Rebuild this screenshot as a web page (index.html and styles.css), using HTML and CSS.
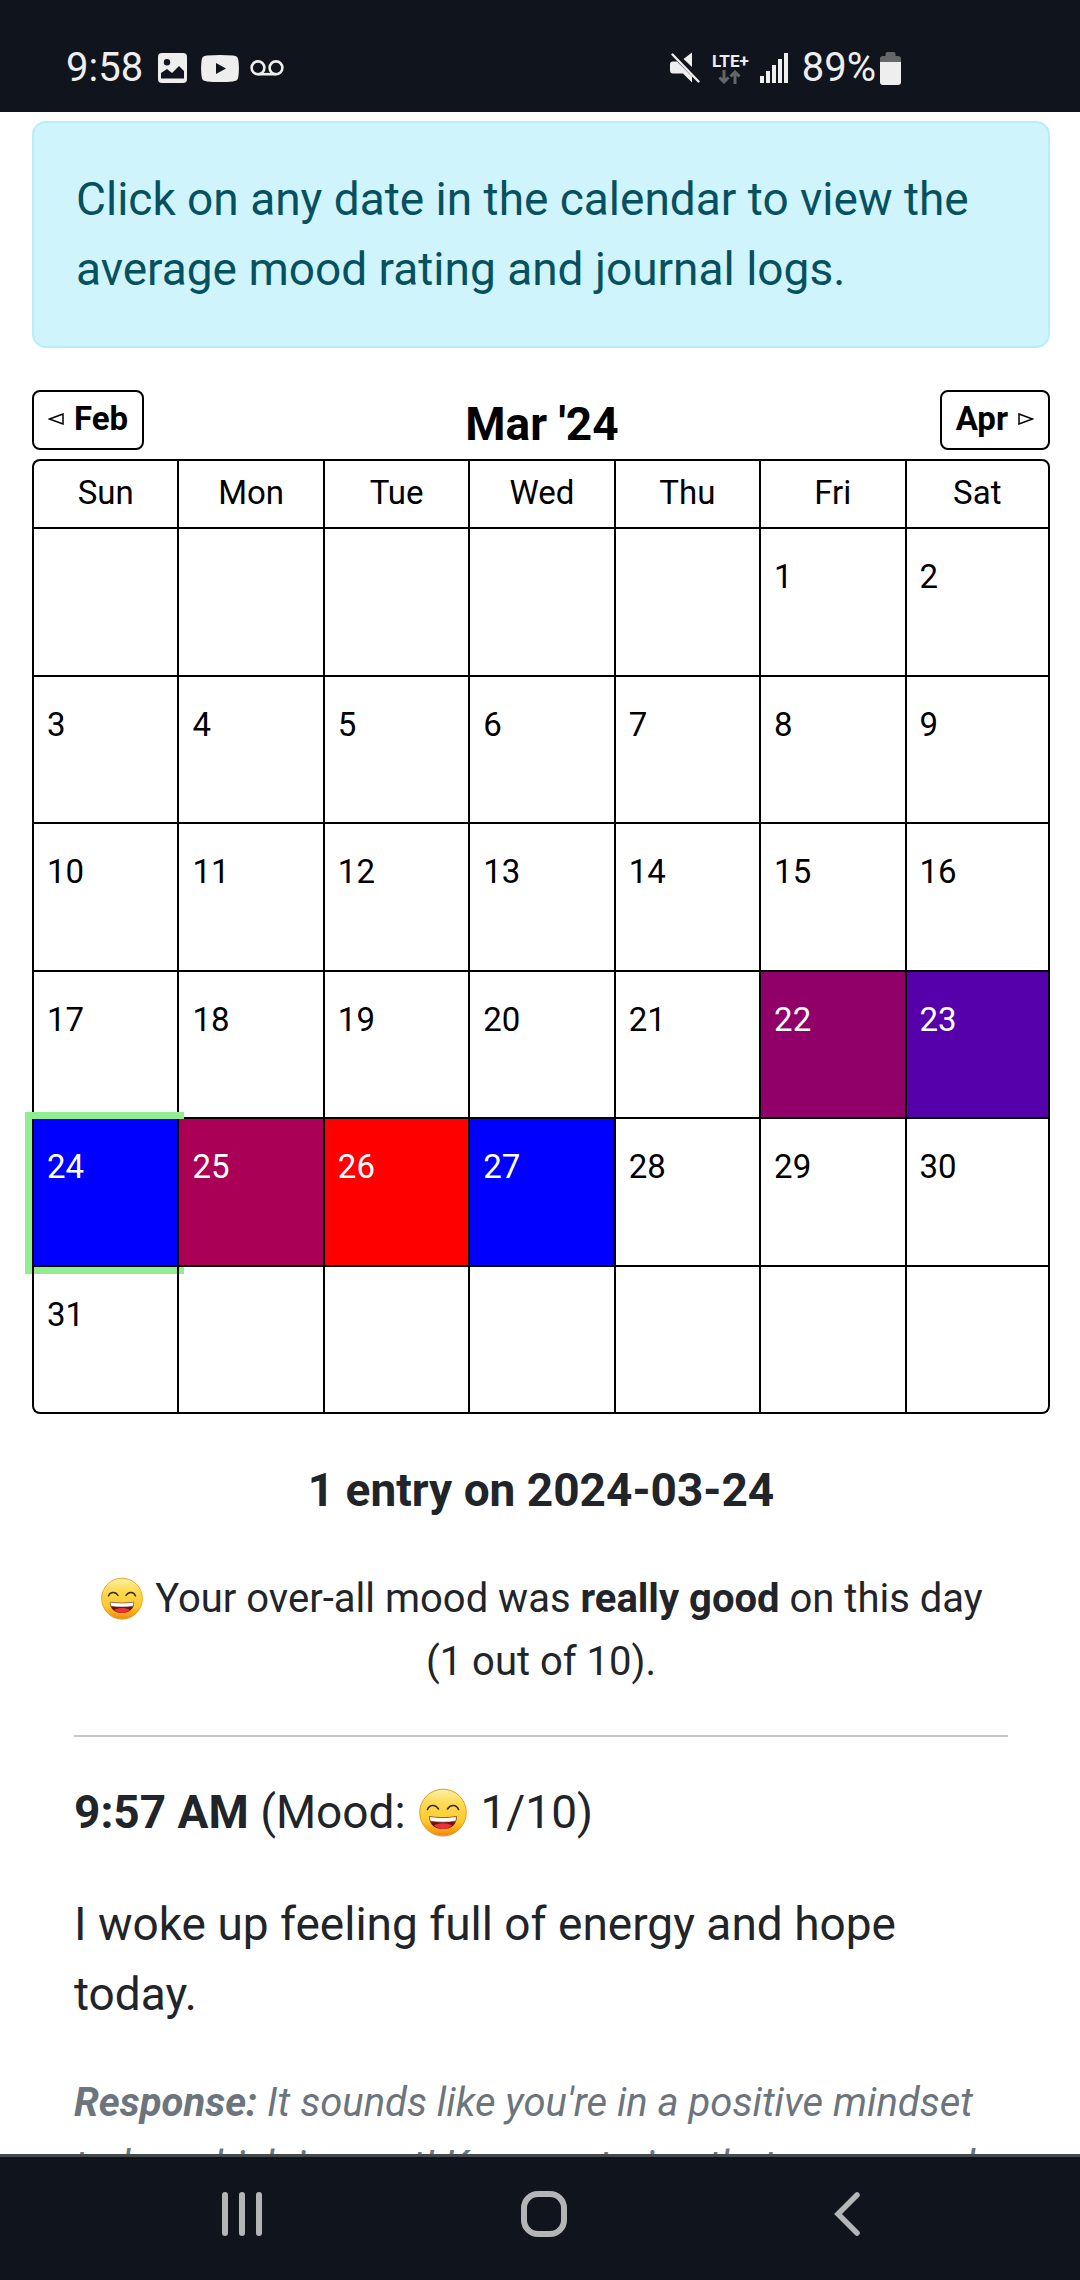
FILE: index.html
```html
<!DOCTYPE html>
<html lang="en">
<head>
<meta charset="utf-8">
<meta name="viewport" content="width=device-width, initial-scale=1">
<title>Mood calendar</title>
<link rel="stylesheet" href="styles.css">
</head>
<body>
<svg class="defs" width="0" height="0" aria-hidden="true">
  <defs>
    <linearGradient id="face" x1="0" y1="0" x2="0" y2="1">
      <stop offset="0" stop-color="#fdf0a8"/>
      <stop offset=".3" stop-color="#fddb55"/>
      <stop offset=".7" stop-color="#fdc92c"/>
      <stop offset="1" stop-color="#f08a0c"/>
    </linearGradient>
    <symbol id="grin" viewBox="0 0 48 50">
      <ellipse cx="24" cy="26.500" rx="22" ry="22.500" fill="#c9a98c" opacity=".45"/>
      <circle cx="24" cy="24.500" r="23.300" fill="url(#face)" stroke="#e79a1a" stroke-width="1"/>
      <path d="M8.500 21.500c2-5 8-5.500 11-.5M28.500 21c3-5 9-4.500 11 .5" fill="none" stroke="#3b2a12" stroke-width="1.600" stroke-linecap="round"/>
      <path d="M10.500 28.500c9 1.500 18 1.500 27 0 .5 8-5 12.500-13.500 12.500s-14-4.500-13.500-12.500z" fill="#7a0d0d"/>
      <path d="M15 37.500c5-3 13-3 18 0-4.500 4.500-13.500 4.500-18 0z" fill="#e8323a"/>
      <path d="M10.500 28.500c9 1.500 18 1.500 27 0 0 1.800-.3 3.300-.8 4.700-8 1.300-17.400 1.300-25.400 0-.5-1.400-.8-2.900-.8-4.700z" fill="#fff" stroke="#4b3018" stroke-width=".6"/>
    </symbol>
  </defs>
</svg>

<header class="status">
  <div class="status-group">
    <span class="status-text">9:58</span>
    <svg class="ic-photo" width="29" height="30" viewBox="0 0 29 30"><path fill="#eee" fill-rule="evenodd" d="M4 0h21a4 4 0 0 1 4 4v22a4 4 0 0 1-4 4H4a4 4 0 0 1-4-4V4a4 4 0 0 1 4-4zM9 6a3.200 3.200 0 1 0 0 6.400A3.200 3.200 0 0 0 9 6zM3 20v5.500h23V18l-5-5-7 7-5-4z"/></svg>
    <svg class="ic-video" width="38" height="27" viewBox="0 0 38 27"><path fill="#eee" fill-rule="evenodd" d="M6 .6C14-.2 24-.2 32 .6c4 .4 5 2 5.400 5 .7 5 .7 11 0 16-.4 3-1.400 4.400-5.400 4.800-8 .8-18 .8-26 0-4-.4-5-1.800-5.400-4.800-.7-5-.7-11 0-16C1 2.600 2 1 6 .6zM15 8v11l10-5.500z"/></svg>
    <svg class="ic-voice" width="34" height="16" viewBox="0 0 34 16"><g fill="none" stroke="#eee" stroke-width="2.600"><circle cx="8" cy="7.800" r="6.400"/><circle cx="26" cy="7.800" r="6.400"/><path d="M8 14.200h18"/></g></svg>
  </div>
  <div class="status-group">
    <svg class="ic-mute" width="30" height="32" viewBox="0 0 30 32"><path fill="#eee" d="M0 12.500a3 3 0 0 1 3-3h4l15 15v6l-9-9H3a3 3 0 0 1-3-3zM22 .5v14.500l-8.500-8z"/><path d="M2.500 2.500l26 27" stroke="#eee" stroke-width="2.400" stroke-linecap="round"/></svg>
    <span class="network">
      <span class="lte">LTE+</span>
      <svg width="24" height="14" viewBox="0 0 24 14"><path d="M6 0v12M1.500 7.500L6 12l4.500-4.500M17 14V2M12.500 6.500L17 2l4.500 4.500" fill="none" stroke="#63666a" stroke-width="3"/></svg>
    </span>
    <svg class="ic-signal" width="28" height="30" viewBox="0 0 28 30"><path fill="#eee" d="M0 23h4v7H0zM6 18h4v12H6zM12 12h4v18h-4zM18 6h4v24h-4zM24 0h4v30h-4z"/></svg>
    <span class="status-text">89%</span>
    <svg class="ic-battery" width="21" height="33" viewBox="0 0 21 33"><path fill="#63666a" d="M7 0h7a1.500 1.500 0 0 1 1.500 1.500V4H18a3 3 0 0 1 3 3v3H0V7a3 3 0 0 1 3-3h2.500V1.500A1.500 1.500 0 0 1 7 0z"/><path fill="#eee" d="M0 10h21v20a3 3 0 0 1-3 3H3a3 3 0 0 1-3-3z"/></svg>
  </div>
</header>

<main class="page">
  <p class="notice">Click on any date in the calendar to view the average mood rating and journal logs.</p>

  <div class="month-bar">
    <button class="month-button" type="button"><svg width="16" height="12" viewBox="0 0 16 12"><path d="M15 1L1.500 6 15 11z" fill="none" stroke="#000" stroke-width="1.500"/></svg>Feb</button>
    <h1 class="month-title">Mar '24</h1>
    <button class="month-button" type="button">Apr<svg width="16" height="12" viewBox="0 0 16 12"><path d="M1 1l13.500 5L1 11z" fill="none" stroke="#000" stroke-width="1.500"/></svg></button>
  </div>

  <table class="calendar">
    <thead>
      <tr><th scope="col">Sun</th><th scope="col">Mon</th><th scope="col">Tue</th><th scope="col">Wed</th><th scope="col">Thu</th><th scope="col">Fri</th><th scope="col">Sat</th></tr>
    </thead>
    <tbody>
      <tr><td></td><td></td><td></td><td></td><td></td><td><button type="button">1</button></td><td><button type="button">2</button></td></tr>
      <tr><td><button type="button">3</button></td><td><button type="button">4</button></td><td><button type="button">5</button></td><td><button type="button">6</button></td><td><button type="button">7</button></td><td><button type="button">8</button></td><td><button type="button">9</button></td></tr>
      <tr><td><button type="button">10</button></td><td><button type="button">11</button></td><td><button type="button">12</button></td><td><button type="button">13</button></td><td><button type="button">14</button></td><td><button type="button">15</button></td><td><button type="button">16</button></td></tr>
      <tr><td><button type="button">17</button></td><td><button type="button">18</button></td><td><button type="button">19</button></td><td><button type="button">20</button></td><td><button type="button">21</button></td><td class="rated mood-6"><button type="button">22</button></td><td class="rated mood-4"><button type="button">23</button></td></tr>
      <tr><td class="rated mood-1 selected"><button type="button">24</button></td><td class="rated mood-7"><button type="button">25</button></td><td class="rated mood-10"><button type="button">26</button></td><td class="rated mood-1"><button type="button">27</button></td><td><button type="button">28</button></td><td><button type="button">29</button></td><td><button type="button">30</button></td></tr>
      <tr><td><button type="button">31</button></td><td></td><td></td><td></td><td></td><td></td><td></td></tr>
    </tbody>
  </table>

  <section class="day">
    <h2 class="day-title">1 entry on 2024-03-24</h2>
    <p class="summary"><svg class="emoji" viewBox="0 0 48 50" role="img" aria-label="Grinning face"><use href="#grin"/></svg> Your over-all mood was <strong>really good</strong> on this day (1&nbsp;out of 10).</p>
    <hr class="rule">
    <p class="entry"><strong>9:57 AM</strong> (Mood: <svg class="emoji emoji-large" viewBox="0 0 48 50" role="img" aria-label="Grinning face"><use href="#grin"/></svg> 1/10)</p>
    <p class="entry">I woke up feeling full of energy and hope today.</p>
    <p class="response"><strong>Response:</strong> It sounds like you're in a positive mindset today, which is great! Keep nurturing that energy and</p>
  </section>
</main>

<nav class="navbar" aria-label="System">
  <button type="button" aria-label="Recent apps"><svg width="42" height="44" viewBox="0 0 42 44"><path d="M4 3v38M21 3v38M38 3v38" stroke="#b4b5b7" stroke-width="6" stroke-linecap="round"/></svg></button>
  <button type="button" aria-label="Home"><svg width="46" height="46" viewBox="0 0 46 46"><rect x="3" y="3" width="40" height="40" rx="14" fill="none" stroke="#b4b5b7" stroke-width="6"/></svg></button>
  <button type="button" aria-label="Back"><svg width="26" height="44" viewBox="0 0 26 44"><path d="M23 3L4 22l19 19" fill="none" stroke="#b4b5b7" stroke-width="5.500" stroke-linecap="round"/></svg></button>
</nav>
</body>
</html>
```
FILE: styles.css
```css
* { box-sizing: border-box; }

body {
  margin: 0;
  height: 100vh;
  display: flex;
  flex-direction: column;
  background: #fff;
  color: #212529;
  font-family: Roboto, "Liberation Sans", sans-serif;
  font-size: 46px;
  line-height: 70px;
}

h1, h2, p { margin: 0; }

button {
  border: 0;
  padding: 0;
  background: none;
  color: inherit;
  font: inherit;
}

.defs { position: absolute; }

/* Phone status bar */
.status {
  flex: none;
  display: flex;
  justify-content: space-between;
  height: 112px;
  padding: 24px 179px 0 66px;
  background: #10141c;
  color: #eee;
}

.status-group {
  display: flex;
  align-items: center;
  height: 88px;
}

.status-text {
  font-size: 40px;
  line-height: 48px;
}

.ic-photo { margin-left: 15px; }
.ic-video { margin-left: 14px; }
.ic-voice { margin-left: 11px; }
.ic-signal { margin: 0 14px 0 11px; }
.ic-battery { margin-left: 4px; }

.network {
  display: flex;
  flex-direction: column;
  align-items: center;
  margin-left: 12px;
}

.lte {
  font-size: 17px;
  font-weight: 700;
  line-height: 18px;
}

/* Page */
.page {
  flex: 1;
  min-height: 0;
  overflow: hidden;
  padding: 9px 30px 0 32px;
}

.notice {
  padding: 41px 42px 42px;
  border: 2px solid #b6effb;
  border-radius: 14px;
  background: #cff4fc;
  color: #055160;
}

.month-bar {
  display: flex;
  justify-content: space-between;
  align-items: flex-start;
  margin-top: 42px;
  color: #000;
}

.month-button {
  display: flex;
  align-items: center;
  gap: 10px;
  height: 60px;
  padding: 0 14px 3px;
  border: 2px solid #000;
  border-radius: 8px;
  font-size: 33px;
  font-weight: 700;
}

.month-title {
  font-size: 46px;
  font-weight: 700;
  line-height: 69px;
}

/* Calendar */
.calendar {
  width: 100%;
  table-layout: fixed;
  border-spacing: 0;
  color: #000;
  font-size: 33px;
  line-height: 40px;
}

.calendar th {
  height: 70px;
  padding: 0 0 2px;
  border: solid #000;
  border-width: 2px 0 2px 2px;
  font-weight: 400;
}

.calendar td {
  height: 147px;
  padding: 28px 13px 0;
  border: solid #000;
  border-width: 0 0 2px 2px;
  vertical-align: top;
}

.calendar tr:nth-child(odd) td { height: 148px; }
.calendar th:last-child,
.calendar tr td:last-child { border-right-width: 2px; }
.calendar th:first-child { border-top-left-radius: 8px; }
.calendar th:last-child { border-top-right-radius: 8px; }
.calendar tr:last-child td:first-child { border-bottom-left-radius: 8px; }
.calendar tr:last-child td:last-child { border-bottom-right-radius: 8px; }

.calendar td button {
  display: block;
  width: 100%;
  text-align: left;
}

.rated { color: #fff; }
.mood-1 { background: #00f; }
.mood-4 { background: #50a; }
.mood-6 { background: #910069; }
.mood-7 { background: #a05; }
.mood-10 { background: #f00; }
.selected { box-shadow: 0 0 0 7px #90ee90; }

/* Entries for the chosen day */
.day { padding: 41px 42px 0; }

.day-title {
  font-size: 46px;
  font-weight: 700;
  text-align: center;
}

.summary {
  margin-top: 42px;
  font-size: 40px;
  line-height: 63px;
  text-align: center;
}

.emoji {
  width: 42px;
  height: 44px;
  margin: 0 2px;
  vertical-align: -9px;
}

.emoji-large {
  width: 48px;
  height: 50px;
  vertical-align: -10px;
}

.rule {
  height: 2px;
  margin: 42px 0 40px;
  border: 0;
  background: #c8c9ca;
}

.entry { margin-bottom: 42px; }

.response {
  color: #6c757d;
  font-size: 40px;
  font-style: italic;
  line-height: 63px;
}

/* Phone navigation bar */
.navbar {
  flex: none;
  display: grid;
  grid-template-columns: repeat(3, 1fr);
  align-items: center;
  justify-items: center;
  height: 126px;
  padding: 0 82px 9px 91px;
  border-top: 3px solid #424a4c;
  background: #10141c;
}

.navbar svg { display: block; }
```
